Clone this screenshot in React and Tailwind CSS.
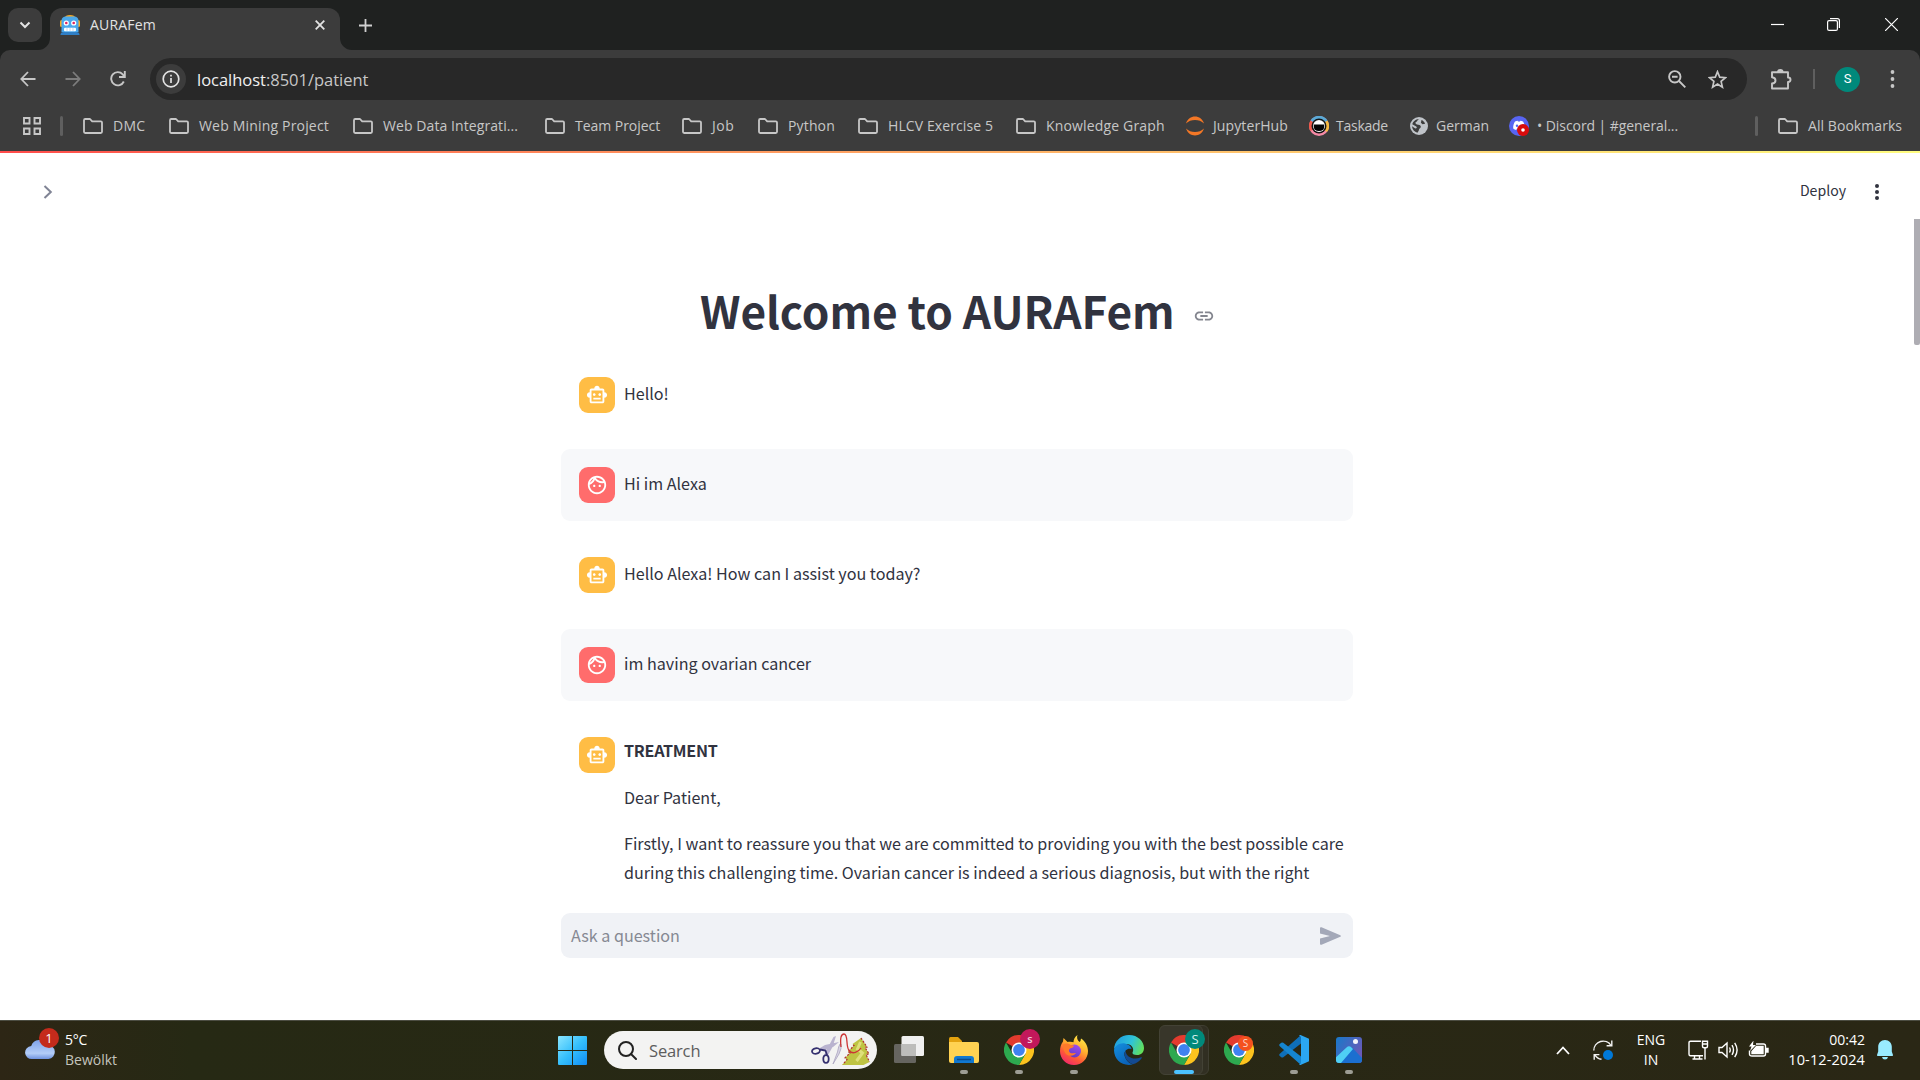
const ui = "font-['Open_Sans','Noto_Sans',sans-serif]";

function Folder() {
  return (
    <svg className="h-4 w-5 shrink-0" viewBox="0 0 20 16" fill="none" stroke="#c7c7c7" strokeWidth="1.8" strokeLinejoin="round">
      <path d="M1 2.2Q1 1 2.2 1H7l2.2 2.4h8.6Q19 3.4 19 4.6v9.2Q19 15 17.8 15H2.2Q1 15 1 13.8z" />
    </svg>
  );
}

function JupyterIcon() {
  return (
    <svg className="h-5 w-5 shrink-0" viewBox="0 0 20 20" fill="#f37726">
      <path d="M1 7.500C2.500 3 6 .6 10 .6S17.500 3 19 7.500C16.500 5 13.500 4 10 4S3.500 5 1 7.500z" />
      <path d="M1 12.500C2.500 17 6 19.400 10 19.400s7.500-2.400 9-6.900C16.500 15 13.500 16 10 16s-6.500-1-9-3.500z" />
    </svg>
  );
}

function TaskadeIcon() {
  return (
    <svg className="h-5 w-5 shrink-0" viewBox="0 0 20 20">
      <circle cx="10" cy="10" r="10" fill="#f58aa5" />
      <path d="M10 10L1.500 4.500A10 10 0 0 1 18.500 4.500z" fill="#5aa9d6" />
      <path d="M10 10L18.500 4.500A10 10 0 0 1 18 16z" fill="#f5b942" />
      <path d="M10 10L1.500 4.500A10 10 0 0 0 1.500 15z" fill="#ef5a4c" />
      <circle cx="10" cy="10" r="7.500" fill="#151515" />
      <circle cx="10" cy="10" r="6" fill="#fff" />
      <path d="M4.800 8.500h10.400v2q0 4.500-5.200 4.500t-5.200-4.500z" fill="#050505" />
    </svg>
  );
}

function GlobeIcon() {
  return (
    <svg className="h-[18px] w-[18px] shrink-0" viewBox="0 0 18 18">
      <circle cx="9" cy="9" r="9" fill="#bfc3c8" />
      <path d="M9 2.200c-2 1-1.500 2.300-3 2.800-1.200.6-.4 2.200 1 2.400 1.800.2 3.600.2 3.800 2 .2 1.500-1.600 1.800-1.800 3.200-.1 1-.6 1.800-1.600 3.200C4.500 15 2.200 12.500 2 9.300l3.300 2.200 1.600-.4-.6-1.600L2.300 7.200C3 4.300 5.500 2.200 9 2.200z" fill="#3c3c3c" />
      <path d="M11.500 3c1.500.6 3 2 3.600 3.800l-2.600.4-1.600-1.500z" fill="#3c3c3c" />
    </svg>
  );
}

function DiscordIcon() {
  return (
    <svg className="h-5 w-5 shrink-0" viewBox="0 0 20 20">
      <circle cx="10" cy="10" r="10" fill="#5865f2" />
      <path d="M6 5.500c1-.5 2-.7 2.600-.8l.4.800h2l.4-.8c.8.1 1.700.3 2.600.8 1.300 2 2 4.300 1.800 7-1 .8-2 1.200-3 1.500l-.7-1.200H7.900L7.200 14c-1-.3-2-.7-3-1.500C4 9.800 4.700 7.500 6 5.500z" fill="#fff" />
      <circle cx="8" cy="9.800" r="1.200" fill="#5865f2" />
      <circle cx="14" cy="14" r="6" fill="#d90b0b" />
      <circle cx="14" cy="14" r="1.800" fill="#fff" />
    </svg>
  );
}

const bookmarks = [
  { label: "DMC", w: "w-[86px]", t: "tracking-[0.3px]" },
  { label: "Web Mining Project", w: "w-[184px]", t: "tracking-[0.18px]" },
  { label: "Web Data Integrati...", w: "w-[192px]", t: "tracking-[0.08px]" },
  { label: "Team Project", w: "w-[137px]", t: "tracking-[-0.04px]" },
  { label: "Job", w: "w-[76px]", t: "tracking-[0.5px]" },
  { label: "Python", w: "w-[100px]", t: "tracking-[0.15px]" },
  { label: "HLCV Exercise 5", w: "w-[158px]", t: "tracking-[0.1px]" },
  { label: "Knowledge Graph", w: "w-[169px]", t: "tracking-[0.16px]" },
  { label: "JupyterHub", w: "w-[124px]", t: "tracking-[0.1px]", Icon: JupyterIcon },
  { label: "Taskade", w: "w-[101px]", t: "-ml-px tracking-[-0.25px]", Icon: TaskadeIcon },
  { label: "German", w: "w-[99px]", t: "tracking-normal", Icon: GlobeIcon },
  { label: "• Discord | #general...", w: "w-[180px]", t: "tracking-[-0.07px]", Icon: DiscordIcon },
];

function RobotFavicon() {
  return (
    <svg className="h-5 w-5" viewBox="0 0 20 20">
      <path d="M5 2.500Q5 0 10 0t5 2.500z" fill="#f5a623" />
      <rect x="0" y="5" width="3" height="7" rx="1.500" fill="#f5a623" />
      <rect x="17" y="5" width="3" height="7" rx="1.500" fill="#f5a623" />
      <path d="M1.500 6Q1.500 1.500 6 1.500h8Q18.500 1.500 18.500 6v11h-17z" fill="#4aa8ec" />
      <path d="M.5 20q0-3 3-3h13q3 0 3 3z" fill="#2f7fc6" />
      <circle cx="6.300" cy="8" r="2.600" fill="#fff" />
      <circle cx="13.700" cy="8" r="2.600" fill="#fff" />
      <circle cx="6.300" cy="8" r="1.300" fill="#e0245e" />
      <circle cx="13.700" cy="8" r="1.300" fill="#e0245e" />
      <rect x="4" y="12.800" width="12" height="3.400" rx="1" fill="#fff" />
      <path d="M7 12.800v3.400M10 12.800v3.400M13 12.800v3.400" stroke="#9cc9ee" strokeWidth=".7" />
    </svg>
  );
}

function TabStrip() {
  return (
    <div className="flex h-[50px] items-start bg-[#1f2120] pl-2 pt-2">
      <button className="flex h-[34px] w-[34px] items-center justify-center rounded-[10px] bg-[#3c3c3c]">
        <svg className="h-3 w-3" viewBox="0 0 12 12" fill="none" stroke="#e3e3e3" strokeWidth="2"><path d="M1.500 3.500L6 8l4.500-4.500" /></svg>
      </button>
      <div className="relative ml-2 flex h-[42px] w-[290px] items-center rounded-t-xl bg-[#3c3c3c] pb-[9px] pl-[10px] pr-[15px]">
        <svg className="absolute -left-3 bottom-0 h-3 w-3" viewBox="0 0 12 12"><path d="M12 0v12H0A12 12 0 0 0 12 0z" fill="#3c3c3c" /></svg>
        <svg className="absolute -right-3 bottom-0 h-3 w-3" viewBox="0 0 12 12"><path d="M0 0v12h12A12 12 0 0 1 0 0z" fill="#3c3c3c" /></svg>
        <RobotFavicon />
        <span className="ml-[10px] mt-px text-[14px] leading-5 tracking-[0.2px] text-[#e3e3e3]">AURAFem</span>
        <svg className="ml-auto h-[10px] w-[10px]" viewBox="0 0 10 10" fill="none" stroke="#e3e3e3" strokeWidth="1.800"><path d="M.7.7l8.600 8.600M9.300.7L.7 9.300" /></svg>
      </div>
      <svg className="ml-[19px] mt-[11px] h-[13px] w-[13px]" viewBox="0 0 13 13" stroke="#d0d0d0" strokeWidth="1.800"><path d="M6.500 0v13M0 6.500h13" /></svg>
      <div className="ml-auto flex items-center pr-[22px] pt-[10px]">
        <svg className="h-[13px] w-[13px]" viewBox="0 0 13 13" stroke="#fff" strokeWidth="1.200"><path d="M0 6.500h13" /></svg>
        <svg className="ml-[43px] h-[13px] w-[13px]" viewBox="0 0 13 13" fill="none" stroke="#fff" strokeWidth="1.200"><rect x=".6" y="2.600" width="9.800" height="9.800" rx="1.500" /><path d="M3 .6h7.400q2 0 2 2V10" /></svg>
        <svg className="ml-[45px] h-[13px] w-[13px]" viewBox="0 0 13 13" fill="none" stroke="#fff" strokeWidth="1.200"><path d="M0 0l13 13M13 0L0 13" /></svg>
      </div>
    </div>
  );
}

function Toolbar() {
  return (
    <div className="flex h-[50px] items-center pt-2">
      <svg className="ml-5 h-4 w-4" viewBox="0 0 16 16" fill="none" stroke="#c7c7c7" strokeWidth="1.800"><path d="M15.500 8H1.500M8 1L1.300 8 8 15" /></svg>
      <svg className="ml-[29px] h-4 w-4" viewBox="0 0 16 16" fill="none" stroke="#7c7c7c" strokeWidth="1.800"><path d="M.5 8h14M8 1l6.700 7L8 15" /></svg>
      <svg className="ml-[29px] h-4 w-4" viewBox="0 0 16 16" fill="none" stroke="#c7c7c7" strokeWidth="1.900"><path d="M13.800 10.500A6.600 6.600 0 1 1 12.700 3.300L14.500 5.500" /><path d="M14.800 0v6H9" /></svg>
      <div className="ml-6 flex h-[42px] w-[1597px] items-center rounded-full bg-[#282828] pl-[6px]">
        <div className="flex h-[30px] w-[30px] items-center justify-center rounded-full bg-[#3c3c3c]">
          <svg className="h-[18px] w-[18px]" viewBox="0 0 18 18" fill="none" stroke="#e3e3e3" strokeWidth="1.700"><circle cx="9" cy="9" r="7.800" /><path d="M9 8v5M9 4.700v1.700" /></svg>
        </div>
        <div className="ml-[11px] mt-px text-[16.5px] leading-6 tracking-[-0.02px] text-[#c7c7c7]"><span className="text-[#f0f0f0]">localhost</span>:8501/patient</div>
        <svg className="ml-auto h-[18px] w-[18px]" viewBox="0 0 18 18" fill="none" stroke="#c7c7c7" strokeWidth="1.900"><circle cx="6.800" cy="6.800" r="5.700" /><path d="M11 11l6.300 6.300M4 6.800h5.600" /></svg>
        <svg className="ml-[22px] mr-5 h-[19px] w-[19px]" viewBox="0 0 19 19" fill="none" stroke="#c7c7c7" strokeWidth="1.700"><path d="M9.500 1.700l2.200 5.400 5.800.5-4.400 3.800 1.300 5.700-4.900-3-4.900 3 1.300-5.700L1.500 7.600l5.800-.5z" /></svg>
      </div>
      <svg className="ml-6 h-[21px] w-[21px]" viewBox="0 0 21 21" fill="none" stroke="#c7c7c7" strokeWidth="1.900" strokeLinejoin="round"><path d="M1 3.300h16v5.200q2.500 0 2.500 2.200T17 13v6.500H1v-5q3.500-.3 3.500-3.100T1 8.300z" /><path d="M7 3q0-2 2.300-2T11.600 3" fill="#c7c7c7" /></svg>
      <div className="ml-[21px] h-5 w-[2px] bg-[#5f5f5f]" />
      <div className="ml-5 flex h-[25px] w-[25px] items-center justify-center rounded-full bg-[#00897b] font-[Roboto,sans-serif] text-[13px] text-white">S</div>
      <svg className="ml-[30px] h-[18px] w-[5px]" viewBox="0 0 5 18" fill="#c7c7c7"><circle cx="2.500" cy="2" r="1.900" /><circle cx="2.500" cy="9" r="1.900" /><circle cx="2.500" cy="16" r="1.900" /></svg>
    </div>
  );
}

function Bookmarks() {
  return (
    <div className="flex h-[51px] items-center text-[14px] leading-5 text-[#c7c7c7]">
      <svg className="ml-[23px] h-[18px] w-[18px]" viewBox="0 0 18 18" fill="none" stroke="#c7c7c7" strokeWidth="1.900"><path d="M1 1h5.500v5.500H1zM11.500 1H17v5.500h-5.500zM1 11.500h5.500V17H1zM11.500 11.500H17V17h-5.500z" /></svg>
      <div className="ml-[19px] mr-[20px] h-5 w-[3px] rounded-full bg-[#5f5f5f]" />
      {bookmarks.map(({ label, w, t, Icon }) => (
        <div key={label} className={`flex items-center ${w} ${Icon ? "gap-2" : "gap-[10px]"}`}>
          {Icon ? <Icon /> : <Folder />}
          <span className={`whitespace-nowrap ${t}`}>{label}</span>
        </div>
      ))}
      <div className="ml-auto mr-[20px] h-5 w-[3px] rounded-full bg-[#5f5f5f]" />
      <div className="mr-4 flex w-[126px] items-center gap-[10px]">
        <Folder />
        <span className="whitespace-nowrap tracking-[0.06px]">All Bookmarks</span>
      </div>
    </div>
  );
}

function BotAvatar() {
  return (
    <div className="flex h-9 w-9 shrink-0 items-center justify-center rounded-[9px] bg-[#ffbd45]">
      <svg className="h-[22px] w-[22px]" viewBox="0 0 24 24" fill="#fff"><path d="M20 9V7c0-1.100-.9-2-2-2h-3c0-1.660-1.340-3-3-3S9 3.340 9 5H6c-1.100 0-2 .9-2 2v2c-1.660 0-3 1.340-3 3s1.340 3 3 3v4c0 1.100.9 2 2 2h12c1.100 0 2-.9 2-2v-4c1.660 0 3-1.340 3-3s-1.340-3-3-3zm-2 10H6V7h12v12zm-9-6c-.83 0-1.500-.67-1.500-1.500S8.170 10 9 10s1.500.67 1.500 1.500S9.830 13 9 13zm7.500-1.500c0 .83-.67 1.500-1.500 1.500s-1.500-.67-1.500-1.500.67-1.500 1.500-1.500 1.500.67 1.500 1.500zM8 15h8v2H8v-2z" /></svg>
    </div>
  );
}

function UserAvatar() {
  return (
    <div className="flex h-9 w-9 shrink-0 items-center justify-center rounded-[9px] bg-[#ff6c6c]">
      <svg className="h-[22px] w-[22px]" viewBox="0 0 24 24" fill="#fff"><path d="M10.250 13c0 .69-.56 1.250-1.250 1.250S7.750 13.690 7.750 13s.56-1.250 1.250-1.250 1.250.56 1.250 1.250zM15 11.750c-.69 0-1.250.56-1.250 1.250s.56 1.250 1.250 1.250 1.250-.56 1.250-1.250-.56-1.250-1.250-1.250zm7 .25c0 5.520-4.480 10-10 10S2 17.520 2 12 6.480 2 12 2s10 4.480 10 10zM10.660 4.120C12.060 6.440 14.600 8 17.500 8c.46 0 .91-.05 1.340-.12C17.440 5.560 14.900 4 12 4c-.46 0-.91.05-1.340.12zM4.420 9.470c1.710-.97 3.030-2.550 3.660-4.440C6.370 6 5.050 7.580 4.420 9.470zM20 12c0-.78-.12-1.530-.33-2.240-.7.150-1.420.24-2.170.24-3.130 0-5.920-1.440-7.760-3.690C8.690 8.870 6.600 10.880 4 11.860c.01.04 0 .09 0 .14 0 4.410 3.590 8 8 8s8-3.590 8-8z" /></svg>
    </div>
  );
}

function Message({ user, text }) {
  return (
    <div className={`flex h-[72px] gap-[9px] rounded-[9px] p-[18px] ${user ? "bg-[#f7f8fa]" : ""}`}>
      {user ? <UserAvatar /> : <BotAvatar />}
      <p className="pt-[2px] leading-[29px]">{text}</p>
    </div>
  );
}

function Page() {
  return (
    <main className="relative flex h-[869px] flex-col bg-white font-['Noto_Sans_CJK_SC',sans-serif] text-[16.12px] text-[#31333f]">
      <div className="h-[2px] shrink-0 bg-linear-to-r from-[#ff4b4b] to-[#fffd80]" />
      <div className="absolute right-0 top-[68px] h-[126px] w-[6px] rounded-b-[2px] bg-[#aeadb3]" />
      <header className="flex h-[76px] shrink-0 items-center pl-[43px] pr-10">
        <svg className="mt-px h-[14px] w-[10px]" viewBox="0 0 10 14" fill="none" stroke="#808495" strokeWidth="2"><path d="M1.500 1L7.800 7l-6.300 6" /></svg>
        <span className="ml-auto text-[14.1px]">Deploy</span>
        <svg className="ml-[28px] mt-px h-4 w-[6px]" viewBox="0 0 6 16" fill="#31333f"><circle cx="3" cy="2" r="2" /><circle cx="3" cy="8" r="2" /><circle cx="3" cy="14" r="2" /></svg>
      </header>
      <section className="ml-[561px] flex min-h-0 w-[792px] flex-1 flex-col overflow-hidden">
        <div className="flex h-[112px] shrink-0 items-center pl-[139px] pt-[50px]">
          <h1 className="whitespace-nowrap text-[44.2px] font-bold leading-[54px] tracking-[-0.05px]">Welcome to AURAFem</h1>
          <svg className="ml-[18px] mt-[12px] h-[22px] w-[22px]" viewBox="0 0 24 24" fill="#83858e"><path d="M3.900 12c0-1.710 1.390-3.100 3.100-3.100h4V7H7c-2.760 0-5 2.240-5 5s2.240 5 5 5h4v-1.900H7c-1.710 0-3.100-1.390-3.100-3.100zM8 13h8v-2H8v2zm9-6h-4v1.900h4c1.710 0 3.100 1.390 3.100 3.100s-1.390 3.100-3.100 3.100h-4V17h4c2.760 0 5-2.240 5-5s-2.240-5-5-5z" /></svg>
        </div>
        <div className="flex flex-col gap-[18px] pt-[18px]">
          <Message text="Hello!" />
          <Message user text="Hi im Alexa" />
          <Message text="Hello Alexa! How can I assist you today?" />
          <Message user text="im having ovarian cancer" />
          <div className="flex gap-[9px] p-[18px]">
            <BotAvatar />
            <div className="-mt-[1px] flex flex-col whitespace-nowrap leading-[28.8px]">
              <p className="mb-[18px] font-bold tracking-[-0.25px]">TREATMENT</p>
              <p className="mb-[17.2px]">Dear Patient,</p>
              <p>
                Firstly, I want to reassure you that we are committed to providing you with the best possible care
                <br />
                during this challenging time. Ovarian cancer is indeed a serious diagnosis, but with the right
              </p>
            </div>
          </div>
        </div>
      </section>
      <div className="mb-[62px] ml-[561px] mt-3 flex h-[45px] w-[792px] shrink-0 items-center rounded-[9px] bg-[#f0f2f6] pl-[10px] pr-3 text-[#868993]">
        <span>Ask a question</span>
        <svg className="ml-auto h-[18px] w-[21px]" viewBox="0 0 21 18" fill="#a3a8b8"><path d="M0 1.200Q0-.3 1.500.3L20.300 8.200q1.200.8 0 1.600L1.500 17.700Q0 18.300 0 16.800V11.600L10 9 0 6.400z" /></svg>
      </div>
    </main>
  );
}

function ChromeIcon() {
  return (
    <svg className="h-[30px] w-[30px]" viewBox="0 0 30 30">
      <path d="M15 15L2 7.500A15 15 0 0 1 28 7.500H15z" fill="#e33b2e" />
      <path d="M15 7.500h13A15 15 0 0 1 15 30l6.500-11.200z" fill="#fcc31e" />
      <path d="M2 7.500A15 15 0 0 0 15 30l6.500-11.200L15 15 8.500 18.800z" fill="#2da94f" />
      <circle cx="15" cy="15" r="7.500" fill="#fff" />
      <circle cx="15" cy="15" r="5.900" fill="#3f82f0" />
    </svg>
  );
}

function Slot({ children, indicator }) {
  return (
    <div className="relative flex h-[59px] w-[55px] shrink-0 items-center justify-center">
      {children}
      {indicator && <div className="absolute bottom-[6px] h-1 w-2 rounded-full bg-[#9d9d94]" />}
    </div>
  );
}

function FirefoxIcon() {
  return (
    <svg className="h-[30px] w-[28px]" viewBox="0 0 28 30">
      <defs>
        <linearGradient id="ffOuter" x1=".8" y1="0" x2=".25" y2="1"><stop offset="0" stopColor="#fff14a" /><stop offset=".4" stopColor="#ffb02e" /><stop offset=".7" stopColor="#ff5a36" /><stop offset="1" stopColor="#f0246e" /></linearGradient>
        <linearGradient id="ffInner" x1=".7" y1="0" x2=".3" y2="1"><stop offset="0" stopColor="#a14bf0" /><stop offset="1" stopColor="#5b3bc4" /></linearGradient>
      </defs>
      <path d="M17.500 0c-1 2.500-.3 5 2 7 1.500-.8 1-2 1.500-3.500 4 2.500 7 7.500 7 12.500C28 24 21.800 30 14 30S0 24 0 16C0 12 1 9 3 6.500L3.500 3 7.500 7c2-.5 4.500-.5 6 .3C13.500 4.500 14.800 1.500 17.500 0z" fill="url(#ffOuter)" />
      <circle cx="14.500" cy="16" r="6.500" fill="url(#ffInner)" />
      <path d="M3 9.500c3-1.500 6-1 7.500.5l3.500.5c0 1.500-2 2.500-4 3-1.500 1-1.500 3.500.5 4.500s4-.5 5.500 0c-1 2-4.500 3.500-7.500 2.500C4 19 3 13 3 9.500z" fill="#ff7a2b" />
    </svg>
  );
}

function EdgeIcon() {
  return (
    <svg className="h-[30px] w-[30px]" viewBox="0 0 30 30">
      <defs>
        <linearGradient id="edTop" x1="0" y1=".3" x2="1" y2=".6"><stop offset="0" stopColor="#1f9de0" /><stop offset=".55" stopColor="#2fc3d8" /><stop offset="1" stopColor="#63e05a" /></linearGradient>
        <linearGradient id="edLeft" x1="0" y1="0" x2=".6" y2="1"><stop offset="0" stopColor="#1490df" /><stop offset="1" stopColor="#0a62b8" /></linearGradient>
      </defs>
      <path d="M0 15C0 6 7 0 15 0c9 0 15 6.500 15 13 0 4.500-3 7-7 7-3.500 0-5-1.500-4.500-2.500 1.500-2 1-8-5.500-8.500C6 8.600 0 12 0 15z" fill="url(#edTop)" />
      <path d="M0 15C1 10.500 6 7.500 11 8.500c4 .8 6.500 3.500 6.500 5.500-5-1.500-8.500 3-6.500 8 1.500 4 5 7 8 7.300C9 32 0 25 0 15z" fill="url(#edLeft)" />
      <path d="M11.500 15.500C9 20 12 27 19 29.300c4-1 7-3.800 8.800-6.300.3-.8-.2-1-.8-.7-7 3.200-15 .2-15.500-6.800z" fill="#134a91" />
    </svg>
  );
}

function VsCodeIcon() {
  return (
    <svg className="h-[30px] w-[30px]" viewBox="0 0 30 30">
      <path d="M22 0L.8 18.800q-1.200 1.200 0 2.200l1.500 1.300q1 .6 2 0L22 8.500z" fill="#0f6fb8" />
      <path d="M22 30L.8 11.200q-1.200-1.200 0-2.200l1.500-1.300q1-.6 2 0L22 21.500z" fill="#1585cf" />
      <path d="M21.500 0L30 3.800v22.400L21.500 30q-1 0-1.500-1 2 .5 2-1.500v-25Q22 .5 20 1q.5-1 1.500-1z" fill="#2ba7f2" />
    </svg>
  );
}

function SearchArt() {
  return (
    <svg className="h-[34px] w-[60px]" viewBox="0 0 60 34">
      <path d="M22.500 4L25 3l-3.500 11-5 9-3-2zM9 15l5-3 14-3-6 5-11 4z" fill="#b9b3cf" />
      <ellipse cx="5" cy="18" rx="4" ry="2.700" fill="none" stroke="#35306f" strokeWidth="1.800" transform="rotate(-12 5 18)" />
      <ellipse cx="15" cy="26" rx="2.700" ry="3.800" fill="none" stroke="#35306f" strokeWidth="1.800" />
      <path d="M9 16.500l5.500 1 1.500 4.500" fill="none" stroke="#35306f" strokeWidth="1.800" />
      <path d="M50 5l6 9-2 .5 4 6.500-3 .5 3.500 7.500-6 3H31l5-5.500-2-1.500 5-5-2-1.500 6-6-1.500-1.500z" fill="#bfc443" />
      <path d="M49.500 9l-3 7 5 4-6 8" fill="none" stroke="#dfe07a" strokeWidth="3" />
      <path d="M50 5l6 9-2 .5 4 6.500-3 .5 3.500 7.500M42 12l1 .5-6 6.500 2 1-5 5 2 1.500-4 5" fill="none" stroke="#b03030" strokeWidth="1.200" strokeDasharray="2 1.500" />
      <path d="M29 11q-1.500 2-2.500 8L22 31l6-10q3-6 2-10z" fill="#d8d4e4" stroke="#a9a3bf" strokeWidth=".8" />
      <path d="M30 14C29 5 30 1 33 1c4.500 0 1.500 12 5 16.500s9.500 1.500 12-2.500" fill="none" stroke="#cc3434" strokeWidth="1.300" />
    </svg>
  );
}

function Taskbar() {
  return (
    <footer className="flex h-[60px] items-center border-t border-[#4c4d42] bg-linear-to-r from-[#2d2615] via-[#262914] via-10% to-[#2a2715] pb-px text-[14px] leading-5 text-white">
      <div className="flex w-[558px] items-center pl-[25px]">
        <div className="relative h-[30px] w-[30px]">
          <svg className="h-[30px] w-[30px]" viewBox="0 0 30 30"><defs><linearGradient id="cl" x1="0" y1="0" x2="0" y2="1"><stop offset="0" stopColor="#7fa3ea" /><stop offset=".7" stopColor="#b3cdf8" /><stop offset="1" stopColor="#6f93e0" /></linearGradient></defs><path d="M7 24a6.500 6.500 0 0 1-.8-13A8.500 8.500 0 0 1 22 10a7 7 0 0 1 1.500 14z" fill="url(#cl)" /></svg>
          <div className="absolute -top-[7px] left-[14px] flex h-5 w-5 items-center justify-center rounded-full bg-[#c42b1c] text-[13px]">1</div>
        </div>
        <div className="-mt-px ml-[10px]">
          <div className="tracking-[-0.2px]">5°C</div>
          <div className="text-[#c4c4bd]">Bewölkt</div>
        </div>
      </div>
      <svg className="h-[29px] w-[29px] shrink-0" viewBox="0 0 29 29"><defs><linearGradient id="win" x1="0" y1="0" x2="1" y2="1"><stop offset="0" stopColor="#8be6ff" /><stop offset=".5" stopColor="#35bffc" /><stop offset="1" stopColor="#0f8cf5" /></linearGradient></defs><path d="M0 1q0-1 1-1h13v14H0zM15 0h13q1 0 1 1v13H15zM0 15h14v14H1q-1 0-1-1zM15 15h14v13q0 1-1 1H15z" fill="url(#win)" /></svg>
      <div className="ml-[17px] flex h-[38px] w-[273px] shrink-0 items-center rounded-full bg-[#f3f3f2] pl-[14px] pr-[6px] text-[16.5px] text-[#5d5d5d]">
        <svg className="h-[19px] w-[19px]" viewBox="0 0 19 19" fill="none" stroke="#222" strokeWidth="2" strokeLinecap="round"><circle cx="8" cy="8" r="7" /><path d="M13 13l5 5" /></svg>
        <span className="ml-3 mt-px tracking-[-0.15px]">Search</span>
        <div className="ml-auto"><SearchArt /></div>
      </div>
      <div className="ml-1 flex w-[495px]">
        <Slot><svg className="h-7 w-[30px]" viewBox="0 0 30 28"><rect y="8" width="22" height="19" rx="1.500" fill="#666560" /><rect x="7.500" width="22.500" height="20" rx="1.500" fill="#f0f0f0" /><path d="M7.500 8H22v12H7.500z" fill="#bdbdbb" /></svg></Slot>
        <Slot indicator><svg className="h-[27px] w-[30px]" viewBox="0 0 30 27"><path d="M0 2Q0 0 1.500 0H9l4 4v5H0z" fill="#e3a20f" /><path d="M0 5h28q2 0 2 2v17q0 2-2 2H2q-2 0-2-2z" fill="#ffd252" /><path d="M5 26v-4q0-3 3-3h14q3 0 3 3v4z" fill="#1178d0" /><path d="M8 22.500h14" stroke="#0a4a8c" strokeWidth="1.500" /></svg></Slot>
        <Slot indicator><ChromeIcon /><span className="absolute left-[29px] top-[8px] flex h-5 w-5 items-center justify-center rounded-full bg-[#c2185b] text-[11px] font-semibold text-[#f1c9d9]">s</span></Slot>
        <Slot indicator><FirefoxIcon /></Slot>
        <Slot><EdgeIcon /></Slot>
        <Slot>
          <div className="absolute left-[8px] top-[4px] h-[50px] w-[45px] rounded-md border border-[#3f3e31] bg-[#312f22]" />
          <div className="absolute left-[3px] top-[4px] flex h-[50px] w-[44px] items-center justify-center rounded-md border border-[#434235] bg-[#38362a]" />
          <div className="relative"><ChromeIcon /></div>
          <span className="absolute left-[29px] top-[8px] flex h-5 w-5 items-center justify-center rounded-full bg-[#00897b] text-[13px] text-[#d5efec]">S</span>
          <div className="absolute bottom-[6px] h-1 w-5 rounded-full bg-[#4cc2ff]" />
        </Slot>
        <Slot><ChromeIcon /><span className="absolute left-[27px] top-[15px] flex h-[15px] w-[15px] items-center justify-center rounded-full bg-[#f4511e] text-[10px] text-[#fbd8cc]">S</span></Slot>
        <Slot indicator><VsCodeIcon /></Slot>
        <Slot indicator><svg className="h-[26px] w-[26px]" viewBox="0 0 26 26"><defs><linearGradient id="ph" x1="0" y1="0" x2="1" y2=".6"><stop offset="0" stopColor="#1879c9" /><stop offset="1" stopColor="#6a59b8" /></linearGradient><clipPath id="phc"><rect width="26" height="26" rx="3" /></clipPath></defs><g clipPath="url(#phc)"><rect width="26" height="26" fill="url(#ph)" /><path d="M3 27L12 11q2-2.500 4.500 0L28 23v5H3z" fill="#1b6fd0" /><path d="M-3 23L10.500 10.500q2.500-2.500 5 0l1.500 1.500L5 26l-2 2h-6z" fill="#4fd0f5" /></g><circle cx="19.500" cy="4.500" r="2.500" fill="#f2f4fb" /></svg></Slot>
      </div>
      <div className="ml-auto flex items-center pr-[27px]">
        <svg className="h-[9px] w-[14px]" viewBox="0 0 14 9" fill="none" stroke="#fff" strokeWidth="1.800"><path d="M1 8l6-6.500L13 8" /></svg>
        <svg className="ml-[23px] h-5 w-5" viewBox="0 0 20 20" fill="none" stroke="#f2f2f2" strokeWidth="1.400"><path d="M.8 10.500A9.300 9.300 0 0 1 18 5.500M18.800.5v5.200h-5.200M8.500 19.300A9.300 9.300 0 0 1 1.800 14.800M1.200 19.800v-5.200h5.200" /><circle cx="15" cy="15" r="5" fill="#0078d7" stroke="none" /></svg>
        <div className="ml-[23px] w-[30px] text-center"><div>ENG</div><div>IN</div></div>
        <svg className="ml-[22px] h-5 w-[21px]" viewBox="0 0 21 20" fill="none" stroke="#fff" strokeWidth="1.400"><path d="M13 1.200H2.500q-1.500 0-1.500 1.500v11.500q0 1.500 1.500 1.500H15M4.500 19h10M6.500 16v3M11.500 16v3" /><path d="M14.500 1.200h5v5q0 1.500-1.500 1.500h-2q-1.500 0-1.500-1.500zM14.500 4h5M17 8v11.500" /></svg>
        <svg className="ml-[9px] h-[18px] w-[21px]" viewBox="0 0 21 18" fill="none" stroke="#fff" strokeWidth="1.400"><path d="M1 6.500h3L9 2v14l-5-4.500H1zM11.500 6.500q1.500 2.500 0 5M14 4.200q3 4.800 0 9.600M16.700 1.800q4.800 7.200 0 14.400" /></svg>
        <svg className="ml-[9px] h-[18px] w-[21px]" viewBox="0 0 21 18" fill="none" stroke="#fff" strokeWidth="1.400"><path d="M8 3h7.500Q17.500 3 17.500 5v8q0 2-2 2H4q-2.500 0-2.500-2V9.500" /><path d="M8.500 5.500h6.500v7H4v-2z" fill="#fff" /><path d="M18 7.500h2v3.500h-2z" fill="#fff" /><path d="M5.500-.5L1 5.500h2.500L2 10l6-6H5z" fill="#fff" stroke="none" /></svg>
        <div className="-mt-px ml-4 w-[80px] text-right"><div>00:42</div><div className="whitespace-nowrap text-[14.5px] tracking-[0.1px]">10-12-2024</div></div>
        <svg className="ml-3 h-5 w-4" viewBox="0 0 16 20" fill="#99ebff"><path d="M8 0c4 0 6.800 3 6.800 6.800v4.700L16 15q.2 1-.8 1H.8q-1 0-.8-1l1.200-3.500V6.800C1.200 3 4 0 8 0zM5 17h6q-.5 2.500-3 2.500T5 17z" /></svg>
      </div>
    </footer>
  );
}

export default function App() {
  return (
    <div className={`flex h-[1080px] w-[1920px] flex-col overflow-hidden ${ui}`}>
      <TabStrip />
      <div className="bg-[#1f2120]">
        <div className="h-[101px] rounded-t-[10px] bg-[#3c3c3c]">
          <Toolbar />
          <Bookmarks />
        </div>
      </div>
      <Page />
      <Taskbar />
    </div>
  );
}
